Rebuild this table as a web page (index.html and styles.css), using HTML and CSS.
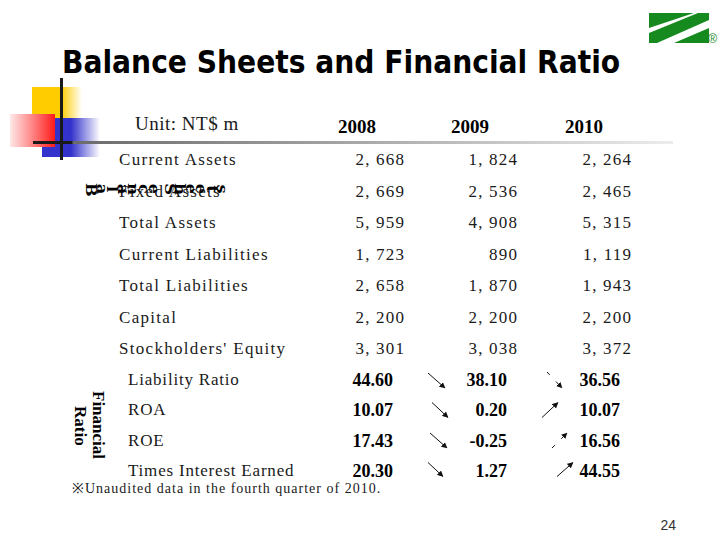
FILE: index.html
```html
<!DOCTYPE html>
<html lang="en">
<head>
<meta charset="utf-8">
<title>Balance Sheets and Financial Ratio</title>
<link rel="stylesheet" href="styles.css">
</head>
<body>
<div class="slide">
  <div class="deco" aria-hidden="true">
    <div class="sq sq-yellow"></div>
    <div class="sq sq-blue"></div>
    <div class="sq sq-red"></div>
    <div class="vline"></div>
    <div class="hline"></div>
  </div>

  <svg class="defs" width="0" height="0" aria-hidden="true">
    <defs>
      <marker id="ah" viewBox="0 0 6 6" refX="5.5" refY="3" markerWidth="6" markerHeight="6" markerUnits="userSpaceOnUse" orient="auto">
        <path d="M0,0 L6,3 L0,6 z" fill="#111"/>
      </marker>
    </defs>
  </svg>

  <header class="top">
    <h1 class="title">Balance Sheets and Financial Ratio</h1>
    <div class="logo">
      <svg class="logo-mark" width="60" height="30" viewBox="0 0 60 30">
        <polygon points="0,0 45,0 0,15" fill="#168a1f"/>
        <polygon points="0,20 49,0 60,0 60,7 8,30 0,30" fill="#168a1f"/>
        <polygon points="25,30 60,15 60,30" fill="#168a1f"/>
      </svg>
      <span class="reg">®</span>
    </div>
  </header>

  <section class="sheet">
    <div class="unit">Unit: NT$ m</div>
    <div class="year">2008</div>
    <div class="year">2009</div>
    <div class="year">2010</div>

    <div class="label">Current Assets</div>
    <div class="num">2, 668</div><div class="num">1, 824</div><div class="num">2, 264</div>

    <div class="label">Fixed Assets</div>
    <div class="num">2, 669</div><div class="num">2, 536</div><div class="num">2, 465</div>

    <div class="label">Total Assets</div>
    <div class="num">5, 959</div><div class="num">4, 908</div><div class="num">5, 315</div>

    <div class="label">Current Liabilities</div>
    <div class="num">1, 723</div><div class="num">890</div><div class="num">1, 119</div>

    <div class="label">Total Liabilities</div>
    <div class="num">2, 658</div><div class="num">1, 870</div><div class="num">1, 943</div>

    <div class="label">Capital</div>
    <div class="num">2, 200</div><div class="num">2, 200</div><div class="num">2, 200</div>

    <div class="label">Stockholders' Equity</div>
    <div class="num">3, 301</div><div class="num">3, 038</div><div class="num">3, 372</div>
  </section>

  <div class="rot-tag" aria-label="Balance Sheets"><span>B</span><span>a</span><span>l</span><span>a</span><span>n</span><span>c</span><span>e</span><span class="gap"> </span><span>S</span><span>h</span><span>e</span><span>e</span><span>t</span><span>s</span></div>

  <section class="ratios">
    <div class="side-label">Financial<br>Ratio</div>

    <div class="rlabel">Liability Ratio</div>
    <div class="val">44.60</div>
    <div class="arrow"><svg width="57" height="30" viewBox="0 0 57 30"><line x1="35" y1="8" x2="52" y2="23" class="ln" marker-end="url(#ah)"/></svg></div>
    <div class="val">38.10</div>
    <div class="arrow"><svg width="68" height="30" viewBox="0 0 68 30"><line x1="40" y1="7" x2="55" y2="23" class="ln dash" marker-end="url(#ah)"/></svg></div>
    <div class="val">36.56</div>

    <div class="rlabel">ROA</div>
    <div class="val">10.07</div>
    <div class="arrow"><svg width="57" height="30" viewBox="0 0 57 30"><line x1="39" y1="7.5" x2="55" y2="22.5" class="ln" marker-end="url(#ah)"/></svg></div>
    <div class="val">0.20</div>
    <div class="arrow"><svg width="68" height="30" viewBox="0 0 68 30"><line x1="35" y1="22.5" x2="51" y2="7.5" class="ln" marker-end="url(#ah)"/></svg></div>
    <div class="val">10.07</div>

    <div class="rlabel">ROE</div>
    <div class="val">17.43</div>
    <div class="arrow"><svg width="57" height="30" viewBox="0 0 57 30"><line x1="37" y1="7" x2="54" y2="22" class="ln" marker-end="url(#ah)"/></svg></div>
    <div class="val">-0.25</div>
    <div class="arrow"><svg width="68" height="30" viewBox="0 0 68 30"><line x1="45" y1="22" x2="60" y2="7" class="ln dash" marker-end="url(#ah)"/></svg></div>
    <div class="val">16.56</div>

    <div class="rlabel">Times Interest Earned</div>
    <div class="val">20.30</div>
    <div class="arrow"><svg width="57" height="30" viewBox="0 0 57 30"><line x1="35" y1="6.5" x2="50" y2="20.5" class="ln" marker-end="url(#ah)"/></svg></div>
    <div class="val">1.27</div>
    <div class="arrow"><svg width="68" height="30" viewBox="0 0 68 30"><line x1="50" y1="20.5" x2="66" y2="6.5" class="ln" marker-end="url(#ah)"/></svg></div>
    <div class="val">44.55</div>

    <p class="note">※Unaudited data in the fourth quarter of 2010.</p>
  </section>

  <footer class="pageno">24</footer>
</div>
</body>
</html>
```

FILE: styles.css
```css
html, body {
  margin: 0;
  background: #fff;
}

.slide {
  position: relative;
  width: 720px;
  height: 540px;
  overflow: hidden;
  display: flex;
  flex-direction: column;
  font-family: "Liberation Serif", serif;
  color: #1a1a1a;
}

/* decorative squares and rules */
.deco {
  position: absolute;
  inset: 0;
  pointer-events: none;
}
.sq, .vline, .hline {
  position: absolute;
}
.sq-yellow {
  left: 32px;
  top: 87px;
  width: 50px;
  height: 31px;
  background: linear-gradient(to right, #ffcc00 0%, #ffcc00 58%, #fff 100%);
}
.sq-blue {
  left: 42px;
  top: 118px;
  width: 58px;
  height: 39px;
  background: linear-gradient(to right, #3333cc 0%, #3333cc 50%, #fff 100%);
}
.sq-red {
  left: 10px;
  top: 114px;
  width: 45px;
  height: 33px;
  background: linear-gradient(to left, #ff1a1a 0%, #ff7a7a 45%, #ffe8e8 100%);
}
.vline {
  left: 60px;
  top: 78px;
  width: 3px;
  height: 82px;
  background: #1a1a1a;
}
.hline {
  left: 33px;
  top: 141px;
  width: 640px;
  height: 3px;
  background: linear-gradient(to right, #1a1a1a 0, #1a1a1a 39px, #6a6a6a 40px, #ececec 100%);
}

.defs {
  position: absolute;
}

/* header */
.top {
  display: flex;
  justify-content: space-between;
  align-items: flex-start;
  height: 111px;
  box-sizing: border-box;
  padding: 13px 3px 0 62px;
  flex-shrink: 0;
}
.title {
  margin: 31px 0 0;
  font-family: "DejaVu Sans Condensed", "DejaVu Sans", sans-serif;
  font-stretch: condensed;
  font-weight: bold;
  font-size: 31.3px;
  line-height: 36px;
  color: #000;
  white-space: nowrap;
}
.logo {
  display: flex;
  align-items: flex-end;
}
.logo-mark {
  display: block;
}
.reg {
  font-family: "Liberation Sans", sans-serif;
  font-size: 12px;
  line-height: 12px;
  color: #168a1f;
  margin-left: -1px;
  margin-bottom: -2px;
}

/* balance sheet table */
.sheet {
  display: grid;
  grid-template-columns: 119px 190px 95px 113px 114px;
  grid-template-rows: 33px;
  grid-auto-rows: 31.5px;
  font-size: 17px;
  flex-shrink: 0;
}
.unit {
  grid-column: 2;
  padding-left: 16px;
  font-size: 19px;
  line-height: 26px;
  letter-spacing: 0.5px;
  white-space: nowrap;
}
.year {
  font-weight: bold;
  font-size: 19px;
  line-height: 26px;
  padding-top: 3px;
  padding-right: 28px;
  text-align: right;
  color: #000;
}
.label {
  grid-column: 2;
  line-height: 31.5px;
  letter-spacing: 1.3px;
  white-space: nowrap;
}
.num {
  text-align: right;
  line-height: 31.5px;
  letter-spacing: 1.2px;
  margin-right: -1.2px;
  white-space: nowrap;
}

/* rotated overlay tag */
.rot-tag {
  position: absolute;
  left: 86px;
  top: 184px;
  display: flex;
  font-family: "DejaVu Serif", serif;
  font-weight: bold;
  font-size: 14px;
  line-height: 10px;
  color: #000;
}
.rot-tag span {
  display: block;
  width: 10.5px;
  height: 10px;
  text-align: center;
  transform: rotate(90deg) scaleX(1.15);
  white-space: pre;
}
.rot-tag .gap {
  width: 5px;
}

/* financial ratio table */
.ratios {
  display: grid;
  grid-template-columns: 128px 172px 93px 57px 57px 68px 45px;
  grid-auto-rows: 30.5px;
  flex-shrink: 0;
}
.side-label {
  grid-column: 1;
  grid-row: 1 / span 4;
  writing-mode: vertical-rl;
  font-weight: bold;
  font-size: 17px;
  line-height: 18px;
  text-align: center;
  align-self: center;
  justify-self: end;
  margin-right: 21px;
  color: #000;
}
.rlabel {
  grid-column: 2;
  font-size: 17px;
  line-height: 30.5px;
  letter-spacing: 0.8px;
  white-space: nowrap;
}
.val {
  font-weight: bold;
  font-size: 18px;
  line-height: 30.5px;
  text-align: right;
  color: #000;
}
.arrow svg {
  display: block;
}
.ln {
  stroke: #111;
  stroke-width: 1;
}
.dash {
  stroke-dasharray: 4 9;
}
.note {
  grid-column: 1 / -1;
  margin: -6px 0 0;
  padding-left: 72px;
  font-size: 14px;
  line-height: 16px;
  letter-spacing: 1px;
  white-space: nowrap;
}

/* page number */
.pageno {
  margin-top: auto;
  text-align: right;
  padding: 0 44px 11px 0;
  font-family: "Liberation Sans", sans-serif;
  font-size: 14px;
  line-height: 16px;
  color: #333;
}
```
